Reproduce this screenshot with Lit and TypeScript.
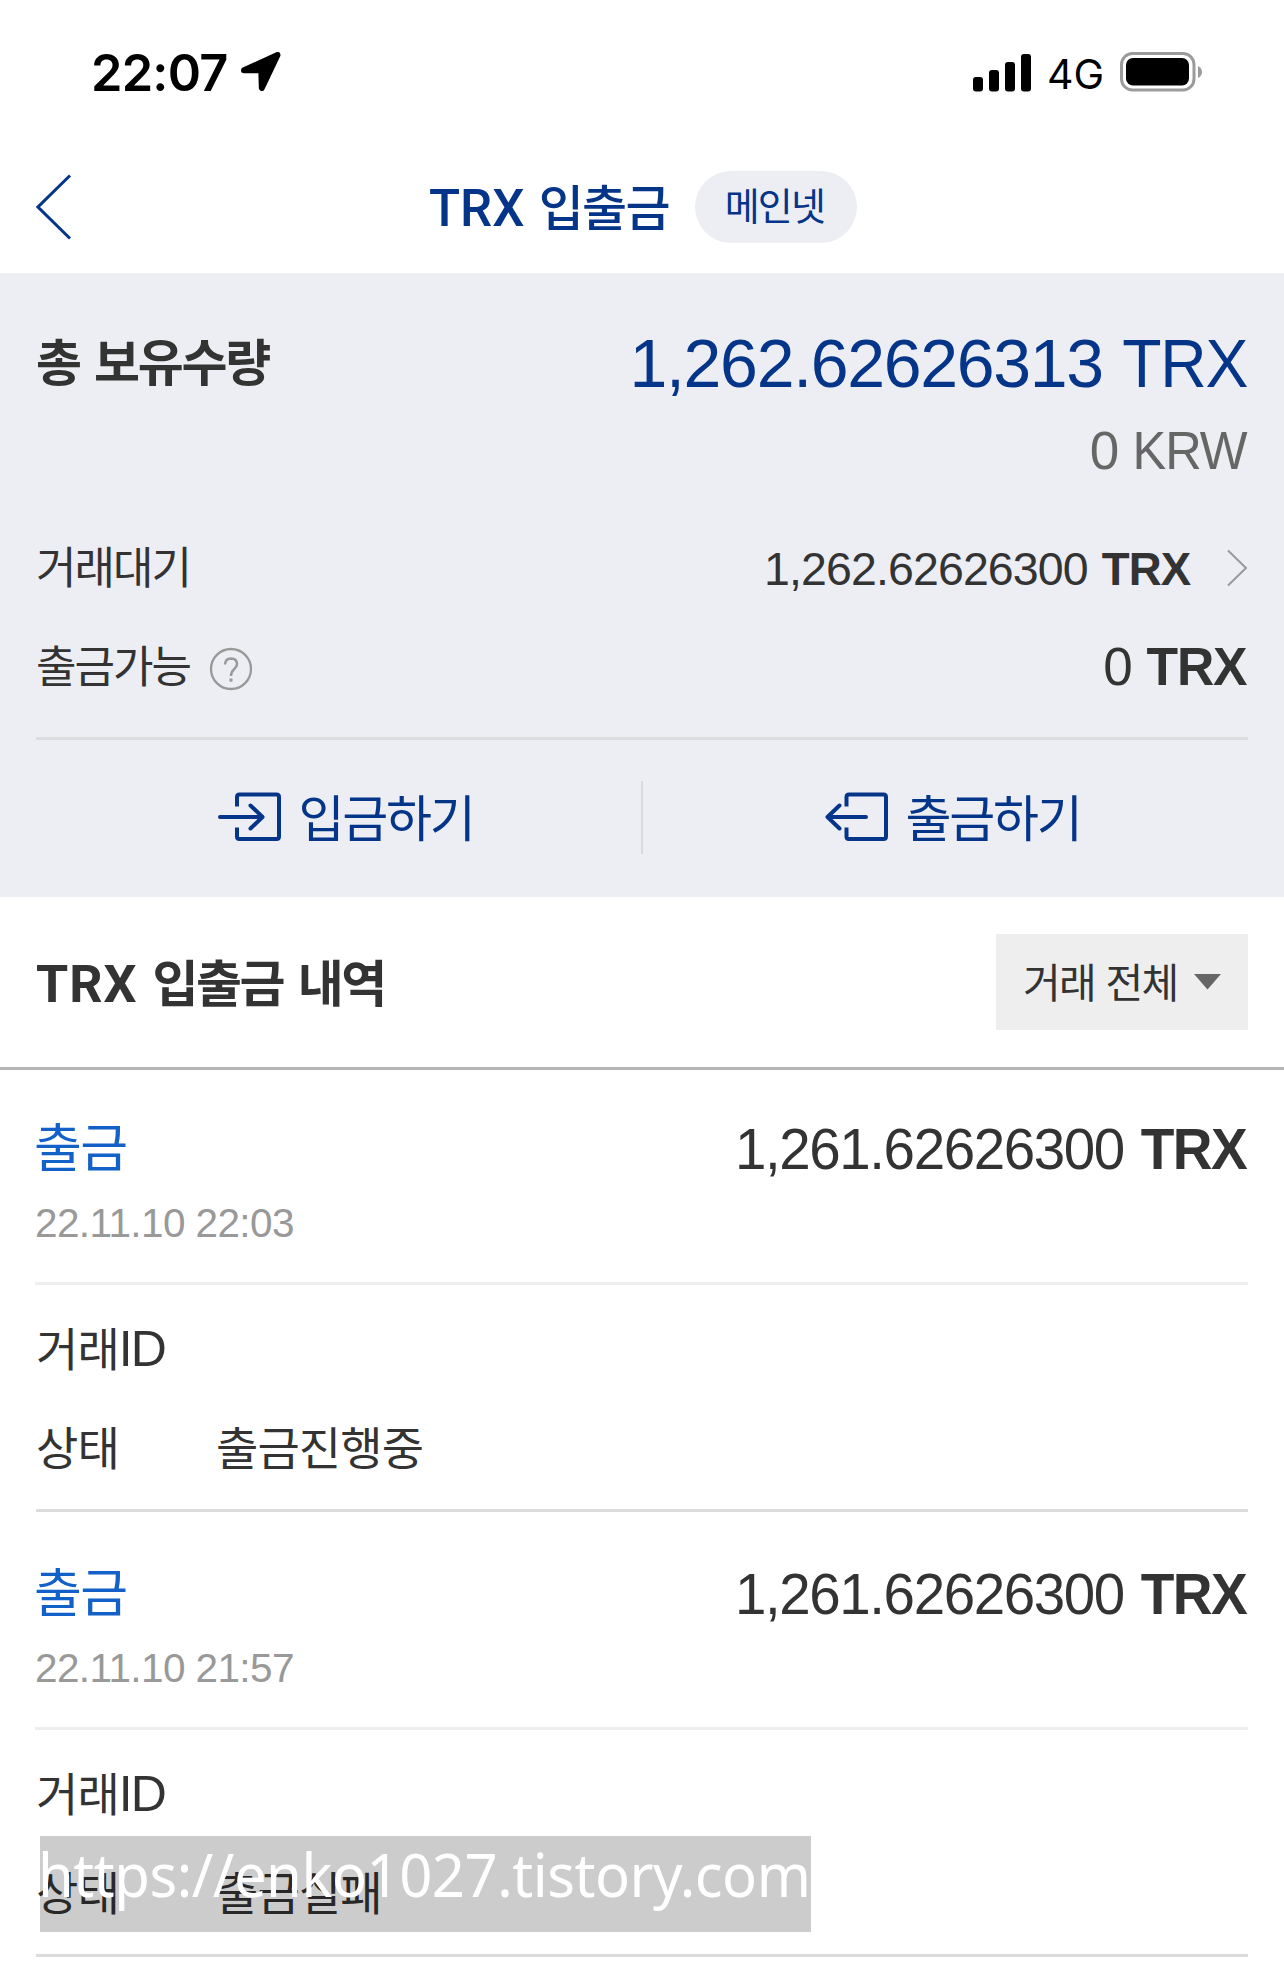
import { LitElement, html, css } from "lit";
import { customElement, property } from "lit/decorators.js";

interface Entry {
  kind: string;
  date: string;
  amount: string;
  status: string;
}

const ENTRIES: Entry[] = [
  { kind: "출금", date: "22.11.10 22:03", amount: "1,261.62626300", status: "출금진행중" },
  { kind: "출금", date: "22.11.10 21:57", amount: "1,261.62626300", status: "출금실패" },
];

@customElement("history-entry")
export class HistoryEntry extends LitElement {
  @property({ attribute: false }) entry!: Entry;

  static styles = css`
    :host {
      display: block;
      box-sizing: border-box;
      height: 445px;
      padding: 42px 36px 0;
      color: #333;
      font-family: "Liberation Sans", "Noto Sans CJK KR", sans-serif;
      white-space: nowrap;
    }
    .head {
      display: flex;
      justify-content: space-between;
      align-items: center;
      height: 80px;
      line-height: 80px;
    }
    .kind {
      font: 400 52px/80px "Noto Sans CJK KR", sans-serif;
      letter-spacing: -1.6px;
      color: #1360c8;
      margin: -9px 0 0 -2px;
    }
    .amount {
      display: flex;
      gap: 14px;
      margin: 1px 2px 0 0;
      font-size: 56.5px;
      letter-spacing: -1.4px;
    }
    .unit {
      font-weight: 700;
      letter-spacing: -1.6px;
      transform: scaleX(0.975);
      transform-origin: right;
    }
    .date {
      margin: 14px 0 0 -1px;
      height: 40px;
      font-size: 40.5px;
      line-height: 40px;
      letter-spacing: -0.6px;
      color: #999;
    }
    .rule {
      height: 3px;
      margin: 39px 0 0 -1px;
      background: #eee;
    }
    .row {
      display: grid;
      grid-template-columns: 180px 1fr;
      height: 60px;
      font: 400 46px/60px "Noto Sans CJK KR", sans-serif;
      letter-spacing: -0.9px;
    }
    .id {
      margin-top: 31px;
    }
    .state {
      margin-top: 39px;
    }
    .latin {
      font-family: "Liberation Sans", sans-serif;
      font-size: 50px;
      letter-spacing: -2px;
    }
    .end {
      height: 3px;
      margin-top: 34px;
      background: #dcdcdc;
    }
  `;

  render() {
    const e = this.entry;
    return html`
      <div class="head">
        <span class="kind">${e.kind}</span>
        <span class="amount"><span>${e.amount}</span><span class="unit">TRX</span></span>
      </div>
      <div class="date">${e.date}</div>
      <div class="rule"></div>
      <div class="row id"><span>거래<span class="latin">ID</span></span></div>
      <div class="row state"><span>상태</span><span>${e.status}</span></div>
      <div class="end"></div>
    `;
  }
}

@customElement("app-root")
export class AppRoot extends LitElement {
  static styles = css`
    :host {
      display: block;
      position: relative;
      width: 1284px;
      height: 1972px;
      overflow: hidden;
      background: #fff;
      color: #333;
      font-family: "Liberation Sans", "Noto Sans CJK KR", sans-serif;
      white-space: nowrap;
    }
    svg {
      display: block;
      flex: none;
    }
    .ko {
      font-family: "Noto Sans CJK KR", sans-serif;
    }
    .status {
      display: flex;
      align-items: center;
      height: 144px;
      padding: 0 81px 0 91px;
      color: #000;
      font-family: Inter, sans-serif;
    }
    .clock {
      font-size: 50.5px;
      font-weight: 600;
      letter-spacing: -0.8px;
      line-height: 60px;
      width: 150px;
      margin-top: 1px;
    }
    .network {
      font-size: 41px;
      line-height: 60px;
      width: 73px;
      margin: 4px 0 0 15px;
      letter-spacing: 0;
    }
    .bars {
      margin: 1px 0 0 auto;
    }
    .nav {
      display: grid;
      grid-template-columns: 393px auto 1fr;
      align-items: center;
      box-sizing: border-box;
      height: 129px;
      padding: 0 36px 4px;
      color: #053589;
    }
    .title {
      font-size: 49px;
      font-weight: 500;
      line-height: 70px;
      letter-spacing: -1.7px;
      word-spacing: 5px;
      margin-top: 0;
    }
    .title .latin {
      font-family: Roboto, sans-serif;
      font-size: 51px;
      letter-spacing: 0;
    }
    .badge {
      justify-self: start;
      box-sizing: border-box;
      width: 162px;
      height: 72px;
      margin-left: 26px;
      padding-right: 3px;
      border-radius: 36px;
      background: #edeef3;
      font-size: 38px;
      line-height: 66px;
      letter-spacing: -1.9px;
      text-align: center;
    }
    .summary {
      height: 624px;
      box-sizing: border-box;
      padding: 50px 36px 0;
      background: #edeef3;
    }
    .line {
      display: flex;
      justify-content: space-between;
      align-items: center;
      height: 60px;
      line-height: 60px;
    }
    .line.total {
      height: 80px;
    }
    .total-label {
      font-size: 50px;
      font-weight: 700;
      letter-spacing: -2.2px;
      word-spacing: 5px;
      margin-top: -9px;
    }
    .value {
      display: flex;
    }
    .unit {
      transform-origin: right;
    }
    .total-value {
      gap: 12px;
      font-size: 68px;
      color: #053589;
      letter-spacing: -1.3px;
      margin-right: 1px;
    }
    .total-value .unit {
      transform: scaleX(0.945);
    }
    .krw {
      justify-content: flex-end;
      gap: 9px;
      margin-top: 18px;
      padding-right: 1px;
      font-size: 53px;
      letter-spacing: -1px;
      color: #666;
    }
    .krw .unit {
      transform: scaleX(0.955);
    }
    .pending {
      margin-top: 58px;
    }
    .available {
      margin-top: 38px;
    }
    .label {
      font-size: 44px;
      letter-spacing: -2px;
      margin-top: -8px;
    }
    .available .label {
      margin-top: -7px;
    }
    .group {
      display: flex;
      align-items: center;
    }
    .help {
      margin: 3px 0 0 19px;
    }
    .sum-pending {
      gap: 12px;
      font-size: 46.5px;
      letter-spacing: -0.9px;
    }
    .sum-pending .unit {
      transform: scaleX(0.98);
    }
    .sum-available {
      gap: 12px;
      font-size: 53px;
      letter-spacing: -1.2px;
      margin-right: 2px;
    }
    .sum-available .unit {
      transform: scaleX(0.975);
    }
    .go {
      margin: -2px 0 0 37px;
    }
    .divider {
      height: 3px;
      margin-top: 40px;
      background: #dcdddf;
    }
    .actions {
      display: grid;
      grid-template-columns: 1fr 2px 1fr;
      align-items: center;
      height: 154px;
      color: #053589;
    }
    .action {
      display: flex;
      align-items: center;
      justify-content: center;
      gap: 16px;
      padding-left: 15px;
      font-size: 50px;
      line-height: 70px;
      letter-spacing: -2.2px;
    }
    .action span {
      margin-top: -5px;
    }
    .bar {
      height: 73px;
      background: #d9dade;
    }
    .filter {
      display: flex;
      justify-content: space-between;
      align-items: center;
      box-sizing: border-box;
      height: 170px;
      padding: 0 36px;
    }
    .heading {
      font-size: 50px;
      font-weight: 700;
      line-height: 70px;
      letter-spacing: -2.5px;
      word-spacing: 6px;
      margin-top: 0;
    }
    .heading .latin {
      font-family: Roboto, sans-serif;
      font-size: 52px;
      letter-spacing: 1px;
    }
    .select {
      display: flex;
      align-items: center;
      box-sizing: border-box;
      width: 252px;
      height: 96px;
      padding: 0 27px;
      justify-content: space-between;
      background: #eee;
    }
    .select span {
      font-size: 41px;
      line-height: 60px;
      letter-spacing: -1.7px;
      word-spacing: 3px;
      margin-top: -5px;
    }
    .thick {
      height: 3px;
      background: #b5b5b5;
      margin-bottom: -3px;
    }
    .stamp {
      position: absolute;
      left: 40px;
      top: 1836px;
      width: 771px;
      height: 96px;
      background: rgba(0, 0, 0, 0.2);
      color: #fff;
      font: 400 61px/76px "Noto Sans", sans-serif;
      letter-spacing: -0.5px;
    }
    .stamp span {
      display: inline-block;
      margin-left: -2px;
      transform: scaleX(0.95);
      transform-origin: left;
    }
  `;

  render() {
    return html`
      <div class="status">
        <span class="clock">22:07</span>
        <svg width="41" height="41" viewBox="0 0 41 41">
          <path d="M3 18.300 36.500 3 20.800 36 20.300 18.300Z" fill="#000" stroke="#000" stroke-width="6" stroke-linejoin="round" />
        </svg>
        <svg class="bars" width="59" height="38" viewBox="0 0 59 38">
          <rect x="0" y="23" width="10" height="14.500" rx="3" />
          <rect x="16" y="16" width="10" height="21.500" rx="3" />
          <rect x="32" y="8" width="10" height="29.500" rx="3" />
          <rect x="48" y="0" width="10" height="37.500" rx="3" />
        </svg>
        <span class="network">4G</span>
        <svg width="83" height="40" viewBox="0 0 83 40">
          <rect x="1.500" y="1.500" width="72.500" height="36.500" rx="11" fill="none" stroke="#9b9b9b" stroke-width="3" />
          <rect x="6" y="6" width="63" height="27.500" rx="7" />
          <path d="M78 14Q82 16 82 20T78 26Z" fill="#9b9b9b" />
        </svg>
      </div>
      <div class="nav">
        <svg width="36" height="66" viewBox="0 0 36 66">
          <path d="M34 1.500 2 33 34 64.500" fill="none" stroke="#053589" stroke-width="3" />
        </svg>
        <span class="title ko"><span class="latin">TRX</span> 입출금</span>
        <span class="badge ko">메인넷</span>
      </div>
      <div class="summary">
        <div class="line total">
          <span class="total-label ko">총 보유수량</span>
          <span class="value total-value"><span>1,262.62626313</span><span class="unit">TRX</span></span>
        </div>
        <div class="line krw"><span>0</span><span class="unit">KRW</span></div>
        <div class="line pending">
          <span class="label ko">거래대기</span>
          <span class="group">
            <span class="value sum-pending"><span>1,262.62626300</span><b class="unit">TRX</b></span>
            <svg class="go" width="21" height="38" viewBox="0 0 21 38">
              <path d="M1 1.500 19 19 1 36.500" fill="none" stroke="#999" stroke-width="2" />
            </svg>
          </span>
        </div>
        <div class="line available">
          <span class="group">
            <span class="label ko">출금가능</span>
            <svg class="help" width="44" height="44" viewBox="0 0 44 44">
              <circle cx="22" cy="22" r="20" fill="none" stroke="#999" stroke-width="2.300" />
              <path d="M16 17.500Q16.300 11.500 22 11.500 28 11.700 28 17 28 19.500 25 22.300 22 25 22 29" fill="none" stroke="#999" stroke-width="2.500" />
              <rect x="20.500" y="31.500" width="3" height="3.200" fill="#999" />
            </svg>
          </span>
          <span class="value sum-available"><span>0</span><b class="unit">TRX</b></span>
        </div>
        <div class="divider"></div>
        <div class="actions">
          <div class="action ko">
            <svg width="64" height="50" viewBox="0 0 64 50" fill="none" stroke="#053589" stroke-width="4" stroke-linejoin="round">
              <path d="M19 14.500V5Q19 2.500 21.500 2.500H58.500Q61 2.500 61 5V44.500Q61 47 58.500 47H21.500Q19 47 19 44.500V35.500" />
              <path d="M2 25H44M32.500 13.500 44.500 25 32.500 36.500" stroke-linecap="round" />
            </svg>
            <span>입금하기</span>
          </div>
          <div class="bar"></div>
          <div class="action ko">
            <svg width="64" height="50" viewBox="0 0 64 50" fill="none" stroke="#053589" stroke-width="4" stroke-linejoin="round">
              <path d="M21.500 14.500V5Q21.500 2.500 24 2.500H58.500Q61 2.500 61 5V44.500Q61 47 58.500 47H24Q21.500 47 21.500 44.500V35.500" />
              <path d="M41 25H3M14.500 13.500 2.500 25 14.500 36.500" stroke-linecap="round" />
            </svg>
            <span>출금하기</span>
          </div>
        </div>
      </div>
      <div class="filter">
        <span class="heading ko"><span class="latin">TRX</span> 입출금 내역</span>
        <div class="select ko">
          <span>거래 전체</span>
          <svg width="27" height="16" viewBox="0 0 27 16"><path d="M0 0H27L13.500 15.500Z" fill="#666" /></svg>
        </div>
      </div>
      <div class="thick"></div>
      ${ENTRIES.map((e) => html`<history-entry .entry=${e}></history-entry>`)}
      <div class="stamp"><span>https://enko1027.tistory.com</span></div>
    `;
  }
}
